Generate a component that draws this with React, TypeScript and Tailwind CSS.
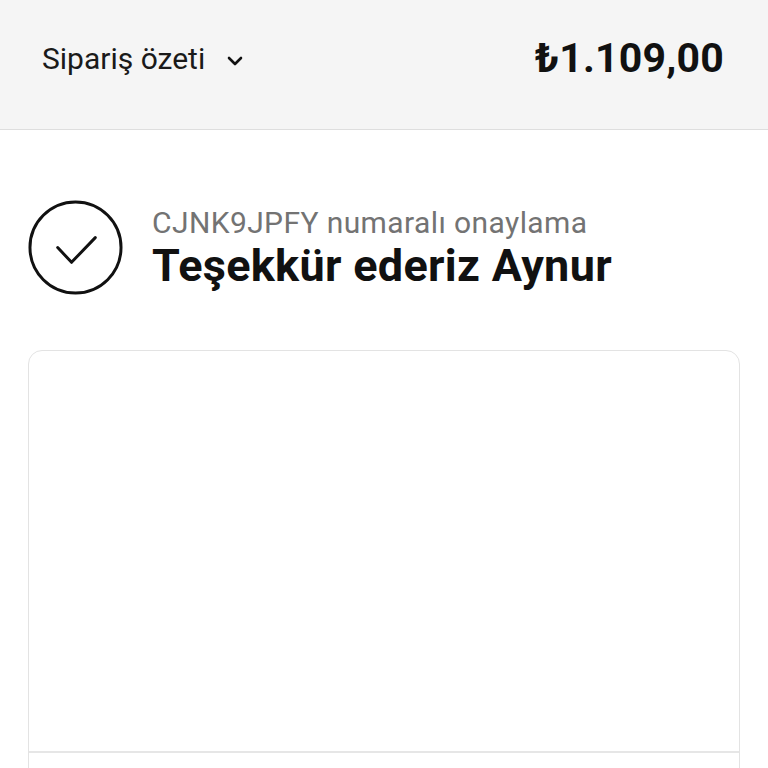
export default function App() {
  return (
    <div className="min-h-screen bg-white font-['Roboto',sans-serif] text-[#111]">
      {/* Header - order summary */}
      <header className="flex h-[130px] items-center justify-between border-b border-[#dedede] bg-[#f5f5f5] pb-[12px] pl-[42px] pr-[44px]">
        <button className="flex items-center gap-[21px] text-[30px] text-[#1a1a1a]">
          <span>Sipariş özeti</span>
          <svg width="18" height="12" viewBox="0 0 18 12" fill="none" className="mt-[4px]">
            <path d="M3 3l6 6 6-6" stroke="#111" strokeWidth="2.6" strokeLinecap="round" strokeLinejoin="round" />
          </svg>
        </button>
        <div className="text-[41px] font-bold tracking-[0.2px]">₺1.109,00</div>
      </header>

      <main className="px-[28px] pt-[70px]">
        {/* Confirmation */}
        <div className="flex items-center gap-[29px]">
          <svg width="95" height="95" viewBox="0 0 96 96" fill="none" className="shrink-0">
            <circle cx="48" cy="48" r="46" stroke="#111" strokeWidth="3" />
            <path d="M30 48l14 15 24-25" stroke="#111" strokeWidth="3" strokeLinecap="round" strokeLinejoin="round" />
          </svg>
          <div>
            <p className="text-[30px] leading-[36px] tracking-[0.4px] text-[#737373]">CJNK9JPFY numaralı onaylama</p>
            <h1 className="text-[45px] font-bold leading-[50px] tracking-[0.3px]">Teşekkür ederiz Aynur</h1>
          </div>
        </div>

        {/* Card */}
        <div className="mt-[55px] overflow-hidden rounded-t-[14px] border border-[#e3e3e3]">
          <div className="h-[400px]" />
          <div className="h-[20px] border-t-2 border-[#e6e6e6]" />
        </div>
      </main>
    </div>
  );
}
